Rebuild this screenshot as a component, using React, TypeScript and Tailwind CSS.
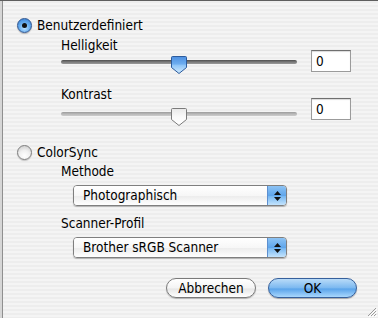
import React from 'react';

const font = { fontFamily: '"DejaVu Sans Condensed", "DejaVu Sans", sans-serif' };

function Radio({ checked }: { checked: boolean }) {
  return checked ? (
    <div className="w-[15px] h-[15px] rounded-full border border-[#2f5590] bg-[radial-gradient(circle_at_50%_70%,#b9e0ff_0%,#6aafef_45%,#2f78d0_100%)] shadow-[0_1px_1px_rgba(0,0,0,0.25)] flex items-center justify-center shrink-0">
      <div className="w-[5px] h-[5px] rounded-full bg-[#111]" />
    </div>
  ) : (
    <div className="w-[15px] h-[15px] rounded-full border border-[#7d7d7d] bg-[radial-gradient(circle_at_50%_75%,#ffffff_0%,#f0f0f0_45%,#c4c4c4_100%)] shadow-[0_1px_1px_rgba(0,0,0,0.2)] shrink-0" />
  );
}

function Thumb({ blue }: { blue: boolean }) {
  return (
    <svg width="18" height="20" viewBox="0 0 18 20" className="absolute top-0 left-[109px]">
      <defs>
        <linearGradient id={blue ? 'tb' : 'tg'} x1="0" y1="0" x2="0" y2="1">
          {blue ? (
            <>
              <stop offset="0" stopColor="#4d8fe0" />
              <stop offset="0.45" stopColor="#6eaef0" />
              <stop offset="0.5" stopColor="#8cc3f7" />
              <stop offset="1" stopColor="#d2ecff" />
            </>
          ) : (
            <>
              <stop offset="0" stopColor="#e8e8e8" />
              <stop offset="0.5" stopColor="#fafafa" />
              <stop offset="1" stopColor="#ffffff" />
            </>
          )}
        </linearGradient>
      </defs>
      <path
        d="M2.5 1.5 H15.5 Q16.5 1.5 16.5 2.5 V12.5 L9 18.5 L1.5 12.5 V2.5 Q1.5 1.5 2.5 1.5 Z"
        fill={`url(#${blue ? 'tb' : 'tg'})`}
        stroke={blue ? '#2c5b9c' : '#7b7b7b'}
        strokeWidth="1"
      />
    </svg>
  );
}

function Slider({ blue, top }: { blue: boolean; top: string }) {
  return (
    <div className={`relative w-[236px] h-[20px] ${top}`}>
      <div
        className={`absolute left-0 right-0 top-[5px] h-[4px] rounded-full ${
          blue
            ? 'bg-[linear-gradient(to_bottom,#4d4d4d,#7a7a7a_50%,#9a9a9a)]'
            : 'bg-[linear-gradient(to_bottom,#9c9c9c,#b8b8b8_50%,#cdcdcd)]'
        }`}
      />
      <Thumb blue={blue} />
    </div>
  );
}

function NumberBox() {
  return (
    <div className="w-[40px] h-[22px] bg-white border border-[#9b9b9b] border-t-[#6f6f6f] shadow-[inset_0_1px_1px_rgba(0,0,0,0.15)] text-[13.5px] leading-[20px] pl-[4px] text-black">
      0
    </div>
  );
}

function Popup({ label }: { label: string }) {
  return (
    <div className="ml-[73px] w-[214px] h-[21px] flex rounded-[4px] border border-[#7f7f7f] shadow-[0_1px_1px_rgba(0,0,0,0.25)] overflow-hidden">
      <div className="flex-1 bg-[linear-gradient(to_bottom,#ffffff,#f7f7f7_50%,#ededed_55%,#ffffff)] text-[13.5px] leading-[19px] pl-[9px] text-black">
        {label}
      </div>
      <div className="w-[19px] border-l border-[#5d8fcf] bg-[linear-gradient(to_bottom,#8dc3f4,#5fa6ec_50%,#78b8f2_55%,#c4e4fd)] flex flex-col items-center justify-center gap-[2px]">
        <svg width="7" height="4" viewBox="0 0 7 4"><path d="M3.5 0 L7 4 H0 Z" fill="#111" /></svg>
        <svg width="7" height="4" viewBox="0 0 7 4"><path d="M0 0 H7 L3.5 4 Z" fill="#111" /></svg>
      </div>
    </div>
  );
}

export default function App() {
  return (
    <div
      style={font}
      className="relative w-[378px] h-[318px] overflow-hidden text-black border-t border-[#5e5e5e] shadow-[inset_2px_0_0_#d6d6d6,inset_3px_0_0_#8f8f8f] bg-[repeating-linear-gradient(to_bottom,#ededed_0px,#ededed_2px,#f4f4f4_2px,#f4f4f4_4px)]"
    >
      <div className="pt-[16px] pl-[17px] flex items-center h-[32px] gap-[5px]">
        <Radio checked />
        <span className="text-[13.5px] leading-[16px]">Benutzerdefiniert</span>
      </div>

      <div className="ml-[61px] mt-[6px] text-[13.5px] leading-[12px] h-[12px]">Helligkeit</div>
      <div className="flex items-start ml-[61px] mt-[-1px] h-[22px]">
        <Slider blue top="mt-[5px]" />
        <div className="ml-[14px]">
          <NumberBox />
        </div>
      </div>

      <div className="ml-[61px] mt-[16px] text-[13.5px] leading-[12px] h-[12px]">Kontrast</div>
      <div className="flex items-start ml-[61px] mt-[-2px] h-[22px]">
        <Slider blue={false} top="mt-[9px]" />
        <div className="ml-[14px]">
          <NumberBox />
        </div>
      </div>

      <div className="mt-[24px] pl-[17px] flex items-center h-[16px] gap-[5px]">
        <Radio checked={false} />
        <span className="text-[13.5px] leading-[16px]">ColorSync</span>
      </div>

      <div className="ml-[61px] mt-[5px] text-[13.5px] leading-[12px] h-[12px]">Methode</div>
      <div className="mt-[8px]">
        <Popup label="Photographisch" />
      </div>

      <div className="ml-[61px] mt-[11px] text-[13.5px] leading-[12px] h-[12px]">Scanner-Profil</div>
      <div className="mt-[8px]">
        <Popup label="Brother sRGB Scanner" />
      </div>

      <div className="mt-[20px] flex justify-end pr-[21px] gap-[12px]">
        <button className="w-[90px] h-[20px] rounded-full border border-[#7a7a7a] bg-[linear-gradient(to_bottom,#ffffff,#f4f4f4_50%,#e6e6e6_55%,#ffffff)] shadow-[0_1px_1px_rgba(0,0,0,0.25)] text-[13.5px] leading-[18px] text-black">
          Abbrechen
        </button>
        <button className="w-[89px] h-[20px] rounded-full border border-[#36609c] bg-[linear-gradient(to_bottom,#b9dbf8,#7bb8f0_50%,#5aa3ea_55%,#a9d8fd)] shadow-[0_1px_1px_rgba(0,0,0,0.3)] text-[13.5px] leading-[18px] text-black">
          OK
        </button>
      </div>

      <svg width="12" height="12" viewBox="0 0 12 12" className="absolute right-[1px] bottom-[1px]">
        <path d="M11 3 L3 11 M11 6 L6 11 M11 9 L9 11" stroke="#9a9a9a" strokeWidth="1" />
        <path d="M12 4 L4 12 M12 7 L7 12 M12 10 L10 12" stroke="#ffffff" strokeWidth="1" />
      </svg>
    </div>
  );
}
